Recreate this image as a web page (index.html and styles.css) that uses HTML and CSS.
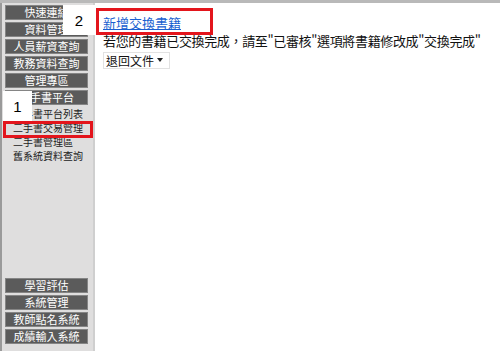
FILE: index.html
```html
<!DOCTYPE html>
<html lang="zh-Hant">
<head>
<meta charset="utf-8">
<title>二手書交易管理</title>
<link rel="stylesheet" href="styles.css">
</head>
<body>
<div class="frame">
  <nav class="sidebar">
    <div class="group">
      <a class="btn" href="#">快速連結</a>
      <a class="btn" href="#">資料管理</a>
      <a class="btn" href="#">人員薪資查詢</a>
      <a class="btn" href="#">教務資料查詢</a>
      <a class="btn" href="#">管理專區</a>
      <a class="btn" href="#">二手書平台</a>
      <div class="sublinks">
        <a href="#">二手書平台列表</a>
        <a href="#">二手書交易管理</a>
        <a href="#">二手書管理區</a>
        <a href="#">舊系統資料查詢</a>
      </div>
    </div>
    <div class="group">
      <a class="btn" href="#">學習評估</a>
      <a class="btn" href="#">系統管理</a>
      <a class="btn" href="#">教師點名系統</a>
      <a class="btn" href="#">成績輸入系統</a>
    </div>
  </nav>
  <main class="main">
    <div class="line"><a class="add" href="#">新增交換書籍</a></div>
    <p class="note">若您的書籍已交換完成，請至"已審核"選項將書籍修改成"交換完成"</p>
    <div class="selwrap">
      <select class="sel"><option>退回文件</option></select>
    </div>
  </main>
</div>
<div class="mark mark-2">2</div>
<div class="mark mark-1">1</div>
<div class="hl hl-1"></div>
<div class="hl hl-2"></div>
</body>
</html>
```

FILE: styles.css
```css
html, body {
  margin: 0;
  padding: 0;
}
body {
  width: 500px;
  height: 351px;
  overflow: hidden;
  background: #ffffff;
  border-top: 3px solid #b9b9b9;
  box-sizing: border-box;
  position: relative;
  font-family: "Noto Sans CJK TC", "Noto Sans", sans-serif;
}
.frame {
  display: flex;
  height: 348px;
}
.sidebar {
  width: 95px;
  flex: none;
  box-sizing: border-box;
  background: #dfdede;
  border-left: 2px solid #9a9a9a;
  border-right: 2px solid #cfcfcf;
  padding: 2px 0 7px 3px;
  display: flex;
  flex-direction: column;
  justify-content: space-between;
}
.group {
  display: flex;
  flex-direction: column;
  gap: 2px;
}
.btn {
  display: block;
  width: 83px;
  height: 15px;
  box-sizing: border-box;
  background: #5b5b5b;
  border: 1px solid #858585;
  color: #ffffff;
  text-decoration: none;
  text-align: center;
  font-size: 11px;
  line-height: 13px;
}
.sublinks {
  display: flex;
  flex-direction: column;
  padding-left: 8px;
}
.sublinks a {
  color: #222222;
  text-decoration: none;
  font-size: 10px;
  line-height: 14px;
  white-space: nowrap;
}
.main {
  flex: 1;
  padding: 8px 0 0 8px;
}
.line {
  line-height: 20px;
  height: 20px;
}
.add {
  color: #1a5fd0;
  font-size: 13px;
  text-decoration: underline;
}
.note {
  margin: 0;
  font-size: 13px;
  line-height: 20px;
  letter-spacing: -0.35px;
  color: #111111;
  white-space: nowrap;
}
.selwrap {
  position: relative;
  width: 67px;
  margin-top: 1px;
}
.sel {
  appearance: none;
  -webkit-appearance: none;
  display: block;
  width: 67px;
  height: 17px;
  box-sizing: border-box;
  border: 1px solid #e2e2e2;
  border-radius: 0;
  background: #ffffff;
  color: #111111;
  font-family: "Noto Sans CJK TC", sans-serif;
  font-size: 12px;
  line-height: 15px;
  padding: 0 0 0 2px;
  margin: 0;
}
.selwrap::after {
  content: "";
  position: absolute;
  right: 7px;
  top: 6px;
  border-left: 3px solid transparent;
  border-right: 3px solid transparent;
  border-top: 4px solid #222222;
  pointer-events: none;
}
.mark {
  position: absolute;
  background: #ffffff;
  color: #000000;
  font-family: "Liberation Sans", Arial, sans-serif;
  font-size: 15px;
  display: flex;
  align-items: center;
  justify-content: center;
}
.mark-2 {
  left: 63px;
  top: 2px;
  width: 32px;
  height: 30px;
}
.mark-1 {
  left: 3px;
  top: 88px;
  width: 29px;
  height: 30px;
}
.hl {
  position: absolute;
  border: 3px solid #e3151c;
  box-sizing: border-box;
}
.hl-1 {
  left: 3px;
  top: 118px;
  width: 90px;
  height: 17px;
}
.hl-2 {
  left: 96px;
  top: 5px;
  width: 117px;
  height: 27px;
}
```
